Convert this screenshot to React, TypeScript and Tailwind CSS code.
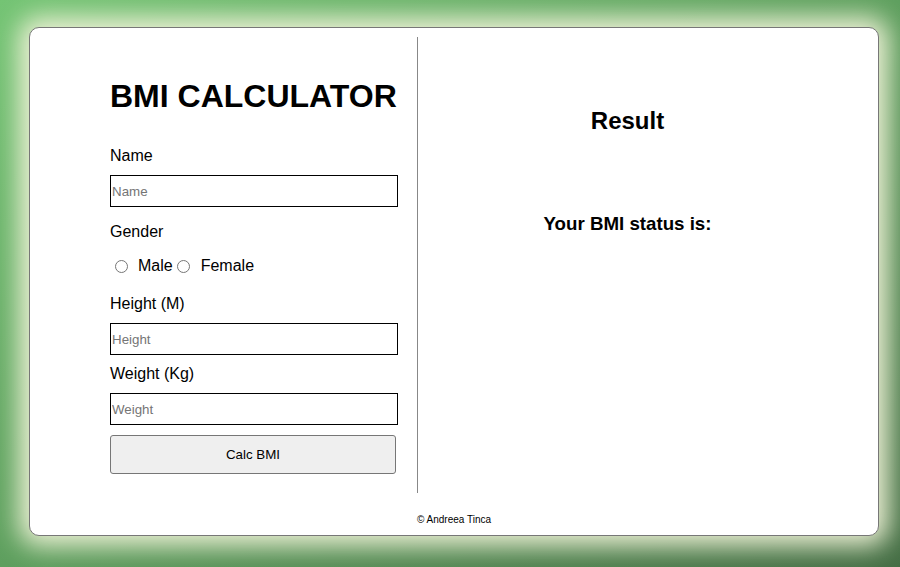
export default function App() {
  const label = "text-[16px] leading-[18px] text-black";
  const input =
    "block w-[288px] h-[32px] border border-black bg-white pl-[1px] text-[13.33px] placeholder:text-[#757575] outline-none";
  const radio = "inline-block w-[13px] h-[13px] rounded-full border border-[#767676] bg-white";

  return (
    <div
      className="h-[567px] w-full overflow-hidden bg-gradient-to-br from-[#74c474] via-[#5e9f5e] to-[#456e45] pt-[27px] pl-[29px]"
      style={{ fontFamily: '"Liberation Sans", Arial, sans-serif' }}
    >
      <div className="w-[850px] h-[509px] rounded-[10px] border border-[#777] bg-white pt-[9px] shadow-[0_0_26px_10px_#eef1d6]">
        <div className="flex h-[456px]">
          <div className="w-[388px] border-r border-[#888] pl-[80px]">
            <h1 className="mt-[41px] text-[32px] leading-[37px] font-bold text-black">BMI CALCULATOR</h1>
            <div className={`${label} mt-[32px]`}>Name</div>
            <input className={`${input} mt-[10px]`} placeholder="Name" />
            <div className={`${label} mt-[16px]`}>Gender</div>
            <div className="mt-[16px] flex items-center text-[16px] leading-[18px]">
              <span className={`${radio} ml-[5px] mr-[10px] mt-[1px]`} />
              <span>Male</span>
              <span className={`${radio} ml-[4px] mr-[11px] mt-[1px]`} />
              <span>Female</span>
            </div>
            <div className={`${label} mt-[20px]`}>Height (M)</div>
            <input className={`${input} mt-[10px]`} placeholder="Height" />
            <div className={`${label} mt-[10px]`}>Weight (Kg)</div>
            <input className={`${input} mt-[10px]`} placeholder="Weight" />
            <button className="mt-[10px] block w-[286px] h-[39px] rounded-[3px] border border-[#767676] bg-[#efefef] text-[13.33px] text-black">
              Calc BMI
            </button>
          </div>
          <div className="w-[419px] text-center">
            <h2 className="mt-[70px] text-[24px] leading-[28px] font-bold text-black">Result</h2>
            <h3 className="mt-[78px] text-[18.72px] leading-[22px] font-bold text-black">Your BMI status is:</h3>
          </div>
        </div>
        <p className="mt-[21px] text-center text-[10px] leading-[12px] text-black">© Andreea Tinca</p>
      </div>
    </div>
  );
}
